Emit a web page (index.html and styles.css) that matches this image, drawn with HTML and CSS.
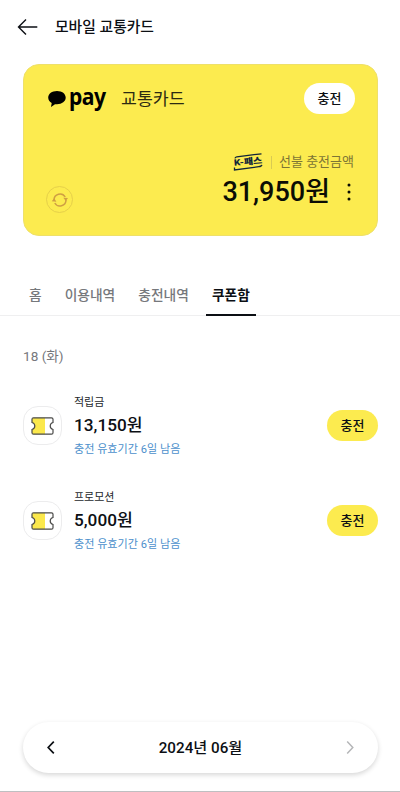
FILE: index.html
```html
<!DOCTYPE html>
<html lang="ko">
<head>
<meta charset="utf-8">
<meta name="viewport" content="width=device-width, initial-scale=1">
<title>모바일 교통카드</title>
<link rel="stylesheet" href="styles.css">
</head>
<body>
<header class="header">
  <svg class="back" width="22" height="18" viewBox="0 0 22 18"><path d="M20.300 9H1.600M9 1.500 1.500 9 9 16.500"/></svg>
  <h1 class="title">모바일 교통카드</h1>
</header>

<section class="card">
  <div class="card-top">
    <svg class="bubble" width="18" height="18" viewBox="0 0 18 18"><path d="M9 1C4 1 .2 3.800.2 7.600c0 2.300 1.400 4.300 3.500 5.500L3 17l4-2.800c.6.1 1.300.1 2 .1 5 0 8.700-2.900 8.700-6.700S14 1 9 1Z"/></svg>
    <span class="pay">pay</span>
    <span class="card-name">교통카드</span>
    <button class="btn btn-white">충전</button>
  </div>
  <div class="card-bottom">
    <span class="refresh">
      <svg width="18" height="16" viewBox="0 0 18 16"><path class="arc" d="M3 8a6 6 0 0 1 11.200-3M15 8A6 6 0 0 1 3.800 11"/><path class="tip" d="M12.300 5.700 17 5.900l-2.200 3ZM.8 9.200l2.400-3 2.200 3.500Z"/></svg>
    </span>
    <div class="balance">
      <div class="balance-label">
        <span class="kpass">
          <svg width="30" height="18" viewBox="0 0 30 18"><path d="M2 5.400Q2.200 4 3.700 3.800L28.500.8M1.500 14.500v2.400l24.300-3.200q2.800-.4 3-1.900"/></svg>
          <b>K-패스</b>
        </span>
        <i class="divider"></i>
        <span class="label">선불 충전금액</span>
      </div>
      <div class="balance-row">
        <strong class="amount">31,950원</strong>
        <svg class="more" width="4" height="18" viewBox="0 0 4 18"><circle cx="2" cy="2" r="1.500"/><circle cx="2" cy="9" r="1.500"/><circle cx="2" cy="16" r="1.500"/></svg>
      </div>
    </div>
  </div>
</section>

<nav class="tabs">
  <a class="tab">홈</a>
  <a class="tab">이용내역</a>
  <a class="tab">충전내역</a>
  <a class="tab active">쿠폰함</a>
</nav>

<main class="list">
  <h2 class="date">18 (화)</h2>
  <article class="item">
    <span class="icon">
      <svg width="23" height="18" viewBox="0 0 23 18" ><path class="fill" d="M2.500.8H14v16.400H2.500Q1 17.200 1 15.700V12.500q2.800-.8 2.800-3.500T1 5.500V2.300Q1 .8 2.500.8Z"/><path class="line" d="M2.500.8h18Q22 .8 22 2.300v3.200Q19.200 6.300 19.200 9t2.800 3.500v3.200q0 1.500-1.500 1.500h-18Q1 17.200 1 15.700V12.500q2.800-.8 2.800-3.500T1 5.500V2.300Q1 .8 2.500.8Z"/></svg>
    </span>
    <div class="info">
      <span class="kind">적립금</span>
      <strong class="price">13,150원</strong>
      <span class="expiry">충전 유효기간 6일 남음</span>
    </div>
    <button class="btn">충전</button>
  </article>
  <article class="item">
    <span class="icon">
      <svg width="23" height="18" viewBox="0 0 23 18" ><path class="fill" d="M2.500.8H14v16.400H2.500Q1 17.200 1 15.700V12.500q2.800-.8 2.800-3.500T1 5.500V2.300Q1 .8 2.500.8Z"/><path class="line" d="M2.500.8h18Q22 .8 22 2.300v3.200Q19.200 6.300 19.200 9t2.800 3.500v3.200q0 1.500-1.500 1.500h-18Q1 17.200 1 15.700V12.500q2.800-.8 2.800-3.500T1 5.500V2.300Q1 .8 2.500.8Z"/></svg>
    </span>
    <div class="info">
      <span class="kind">프로모션</span>
      <strong class="price">5,000원</strong>
      <span class="expiry">충전 유효기간 6일 남음</span>
    </div>
    <button class="btn">충전</button>
  </article>
</main>

<footer class="footer">
  <div class="month">
    <svg class="prev" width="8" height="13" viewBox="0 0 8 13"><path d="M6.800.6 1.200 6.500l5.600 5.900"/></svg>
    <span class="month-text">2024년 06월</span>
    <svg class="next" width="8" height="13" viewBox="0 0 8 13"><path d="m1.200.6 5.600 5.900-5.600 5.900"/></svg>
  </div>
</footer>
</body>
</html>
```
FILE: styles.css
```css
* { box-sizing: border-box; margin: 0; padding: 0; }

body {
  display: flex;
  flex-direction: column;
  height: 792px;
  background: #fff;
  color: #0c0f14;
  font-family: Roboto, "Noto Sans CJK KR", sans-serif;
  white-space: nowrap;
  overflow: hidden;
}

svg { display: block; flex: none; fill: none; }

.header { display: flex; align-items: center; height: 54px; padding-left: 16.5px; }
.back { stroke: #0c0f14; stroke-width: 1.4; }
.title { margin-left: 16.5px; font-size: 14.8px; font-weight: 500; line-height: 20px; }

.card {
  display: flex;
  flex-direction: column;
  justify-content: space-between;
  height: 172px;
  margin: 10px 22px 0 23px;
  padding: 18px 22px 22px 23px;
  border: 1px solid #eee06a;
  border-radius: 16px;
  background: #fceb4f;
}
.card-top { display: flex; align-items: center; height: 31px; }
.bubble { margin-left: 1px; fill: #000; }
.pay {
  width: 37px;
  margin: -6px 0 0 3px;
  color: #000;
  font: 700 23.5px/30px "Noto Sans", sans-serif;
  letter-spacing: -0.6px;
  transform: scaleX(0.9);
  transform-origin: left;
}
.card-name { margin-left: 15px; font-size: 17.3px; font-weight: 400; line-height: 24px; color: #2c2a12; }

.btn {
  width: 51px;
  height: 31px;
  margin-left: auto;
  border: 0;
  border-radius: 16px;
  background: #fceb4f;
  color: #0c0f14;
  font: 500 13px/31px Roboto, "Noto Sans CJK KR", sans-serif;
}
.btn-white { background: #fff; }

.card-bottom { display: flex; align-items: flex-end; justify-content: space-between; }
.refresh {
  display: grid;
  place-items: center;
  width: 27px;
  height: 27px;
  margin-left: -1px;
  border: 1px solid #e6d04a;
  border-radius: 50%;
}
.arc { stroke: #cf9f43; stroke-width: 1.5; }
.tip { fill: #cf9f43; }
.balance { display: flex; flex-direction: column; align-items: flex-end; padding-right: 1px; }
.balance-label { display: flex; align-items: center; height: 20px; }
.kpass { display: grid; place-items: center; width: 30px; height: 18px; }
.kpass > * { grid-area: 1 / 1; }
.kpass svg { stroke: #10243a; stroke-width: 1.3; }
.kpass b {
  color: #10243a;
  font-size: 10px;
  font-weight: 900;
  line-height: 12px;
  letter-spacing: -0.1px;
  transform: rotate(-5deg) scaleY(0.88);
}
.divider { width: 1px; height: 13px; margin: 0 7px 0 8px; background: #d9cb52; }
.label { color: #7d7535; font-size: 13px; line-height: 20px; }
.balance-row { display: flex; align-items: center; height: 40px; margin-bottom: 1px; }
.amount { color: #0b0d05; font-size: 27px; font-weight: 500; line-height: 40px; }
.more { margin: 0 3px 0 17px; fill: #0b0d05; }

.tabs {
  display: flex;
  height: 41px;
  margin-top: 39px;
  padding-left: 23px;
  border-bottom: 1px solid #efeff0;
}
.tab {
  height: 41px;
  margin-right: 11px;
  padding: 0 6px;
  color: #76787c;
  font-size: 13.75px;
  font-weight: 500;
  line-height: 41px;
}
.active { border-bottom: 2px solid #0c0f14; color: #0c0f14; font-weight: 700; }

.list { padding: 0 22px 0 23px; }
.date { margin-top: 30px; color: #76787c; font-size: 13.6px; font-weight: 400; line-height: 20px; }
.item { display: flex; align-items: center; height: 65px; margin-top: 27px; }
.item + .item { margin-top: 30px; }
.icon {
  display: grid;
  place-items: center;
  width: 39px;
  height: 39px;
  border: 1px solid #ececed;
  border-radius: 15px;
}
.fill { fill: #fbe84c; }
.line { stroke: #4a4a48; stroke-width: 1.2; }
.info { display: flex; flex-direction: column; margin: 2px 0 0 12px; }
.kind { color: #25282c; font-size: 11px; line-height: 18px; }
.price { font-size: 17.2px; font-weight: 500; line-height: 26px; padding-bottom: 2px; }
.expiry { color: #4c90cc; font-size: 11.1px; line-height: 19px; }

.footer { margin-top: auto; padding: 0 22px 18px 23px; border-bottom: 1px solid #bfbfc1; }
.month {
  display: flex;
  align-items: center;
  justify-content: space-between;
  height: 51px;
  padding: 0 24px;
  border-radius: 26px;
  background: #fff;
  box-shadow: 0 2px 5px rgba(0, 0, 0, 0.16);
}
.month-text { font-size: 15.2px; font-weight: 500; line-height: 24px; }
.prev { stroke: #0c0f14; stroke-width: 1.7; }
.next { stroke: #b5b6b8; stroke-width: 1.5; }
```
